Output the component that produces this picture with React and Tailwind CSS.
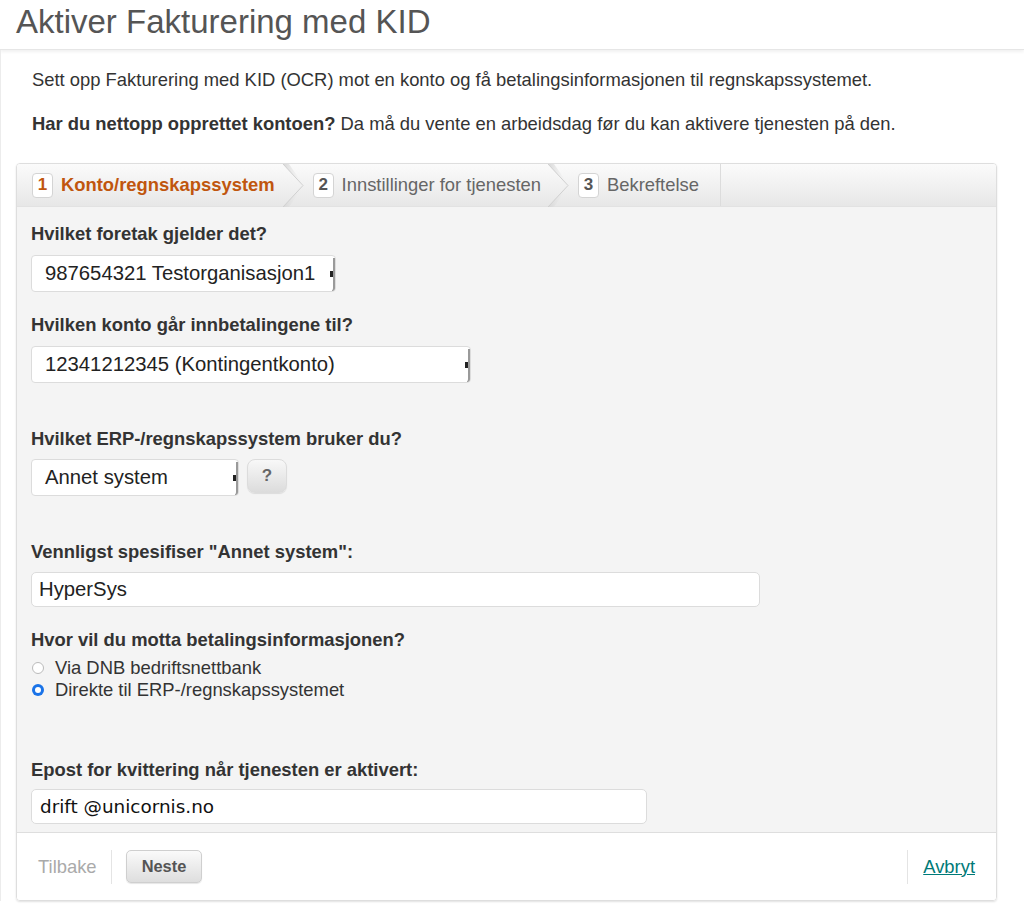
import React from "react";

const font = { fontFamily: '"Liberation Sans", Arial, sans-serif' };

function Chevron() {
  return (
    <svg width="21" height="43" viewBox="0 0 21 43" className="shrink-0">
      <defs>
        <linearGradient id="chs" x1="0" x2="1" y1="0" y2="0">
          <stop offset="0" stopColor="#d6d6d6" />
          <stop offset="1" stopColor="#f2f2f2" stopOpacity="0" />
        </linearGradient>
      </defs>
      <polygon points="0,0 20,21.5 0,43 6,43 21,21.5 6,0" fill="url(#chs)" />
      <polyline points="0,0 20,21.5 0,43" fill="none" stroke="#d0d0d0" strokeWidth="1" />
    </svg>
  );
}

function Badge({ n, active }) {
  return (
    <span
      className={`inline-flex h-[25px] w-[21px] shrink-0 items-center justify-center rounded-[4px] border border-[#d4d4d4] bg-white text-[17px] font-bold ${
        active ? "text-[#c0560e]" : "text-[#555]"
      }`}
    >
      {n}
    </span>
  );
}

function FakeSelect({ width, children }) {
  return (
    <div
      className="relative flex h-[37px] shrink-0 items-center rounded-[4px] border border-[#dcdcdc] bg-white pl-[13px] text-[20.3px] text-[#222]"
      style={{ width }}
    >
      <span>{children}</span>
      <span className="absolute right-0 top-[2px] bottom-0 w-[3px] rounded-br-[3px] border-r-2 border-b border-[#9a9a9a]" />
      <span className="absolute right-[2px] top-[15px] h-[6px] w-[3px] bg-[#222]" />
    </div>
  );
}

function Label({ children, className = "" }) {
  return <div className={`text-[18.4px] font-bold leading-[22px] text-[#333] ${className}`}>{children}</div>;
}

export default function App() {
  return (
    <div className="min-h-[913px] bg-white" style={font}>
      <div className="h-[50px] border-b border-[#e6e6e6] pl-4 pt-[1px] shadow-[0_2px_3px_rgba(0,0,0,0.06)]">
        <h1 className="text-[33px] leading-[42px] text-[#555]">Aktiver Fakturering med KID</h1>
      </div>
      <div className="border-l border-[#ececec] pl-[15px] pr-[27px]">
        <p className="pl-[16px] pt-[19px] text-[18.4px] leading-[22px] text-[#333]">
          Sett opp Fakturering med KID (OCR) mot en konto og få betalingsinformasjonen til regnskapssystemet.
        </p>
        <p className="pl-[16px] pt-[22px] text-[18.4px] leading-[22px] text-[#333]">
          <b>Har du nettopp opprettet kontoen?</b> Da må du vente en arbeidsdag før du kan aktivere tjenesten på den.
        </p>

        <div className="mt-[28px] overflow-hidden rounded-[4px] border border-[#dedede] shadow-[0_1px_2px_rgba(0,0,0,0.12)]">
          {/* tab bar */}
          <div className="flex h-[43px] items-center border-b border-[#e2e2e2] bg-gradient-to-b from-[#fbfbfb] to-[#e7e7e7]">
            <div className="flex h-full items-center gap-[8px] pl-[15px] pr-[8px]">
              <Badge n="1" active />
              <span className="whitespace-nowrap text-[18.4px] font-bold text-[#c0560e]">Konto/regnskapssystem</span>
            </div>
            <Chevron />
            <div className="flex h-full items-center gap-[8px] pl-[9px] pr-[7px]">
              <Badge n="2" />
              <span className="whitespace-nowrap text-[18.4px] text-[#666]">Innstillinger for tjenesten</span>
            </div>
            <Chevron />
            <div className="flex h-full items-center gap-[8px] border-r border-[#dcdcdc] pl-[9px] pr-[21px]">
              <Badge n="3" />
              <span className="whitespace-nowrap text-[18.4px] text-[#666]">Bekreftelse</span>
            </div>
          </div>

          {/* body */}
          <div className="bg-[#f4f4f4] px-[14px] pt-[16px] pb-[8px]">
            <Label>Hvilket foretak gjelder det?</Label>
            <div className="mt-[10px]">
              <FakeSelect width={305}>987654321 Testorganisasjon1</FakeSelect>
            </div>

            <Label className="mt-[22px]">Hvilken konto går innbetalingene til?</Label>
            <div className="mt-[10px]">
              <FakeSelect width={440}>12341212345 (Kontingentkonto)</FakeSelect>
            </div>

            <Label className="mt-[45px]">Hvilket ERP-/regnskapssystem bruker du?</Label>
            <div className="mt-[9px] flex items-start gap-[8px]">
              <FakeSelect width={208}>Annet system</FakeSelect>
              <button className="h-[34px] w-[40px] rounded-[8px] border border-[#dcdcdc] bg-gradient-to-b from-[#f8f8f8] to-[#dcdcdc] text-[17px] font-bold text-[#666] shadow-[0_1px_1px_rgba(0,0,0,0.1)]">
                ?
              </button>
            </div>

            <Label className="mt-[45px]">Vennligst spesifiser "Annet system":</Label>
            <div className="mt-[9px] flex h-[35px] w-[729px] items-center rounded-[5px] border border-[#dcdcdc] bg-white pl-[7px] text-[20.3px] text-[#222]">
              HyperSys
            </div>

            <Label className="mt-[22px]">Hvor vil du motta betalingsinformasjonen?</Label>
            <div className="mt-[6px] flex flex-col text-[18.4px] leading-[22px] text-[#333]">
              <div className="flex items-center">
                <span className="ml-[1px] h-[12px] w-[12px] rounded-full border border-[#bbb] bg-white" />
                <span className="ml-[11px]">Via DNB bedriftsnettbank</span>
              </div>
              <div className="flex items-center">
                <span className="ml-[1px] flex h-[12px] w-[12px] items-center justify-center rounded-full bg-[#1a73e8]">
                  <span className="h-[6px] w-[6px] rounded-full bg-white" />
                </span>
                <span className="ml-[11px]">Direkte til ERP-/regnskapssystemet</span>
              </div>
            </div>

            <Label className="mt-[58px]">Epost for kvittering når tjenesten er aktivert:</Label>
            <div
              className="mt-[8px] flex h-[35px] w-[616px] items-center rounded-[5px] border border-[#dcdcdc] bg-white pl-[8px] text-[18.4px] text-[#111]"
              style={{ fontFamily: '"DejaVu Sans", Verdana, sans-serif' }}
            >
              drift @unicornis.no
            </div>
          </div>

          {/* footer */}
          <div className="flex h-[68px] items-center border-t border-[#dedede] bg-white">
            <span className="w-[94px] pl-[21px] text-[18.4px] text-[#aaa]">Tilbake</span>
            <span className="h-[34px] w-px bg-[#e4e4e4]" />
            <button className="ml-[14px] h-[33px] w-[76px] rounded-[5px] border border-[#cfcfcf] bg-gradient-to-b from-[#fafafa] to-[#dedede] text-[16.4px] font-bold text-[#555] shadow-[0_1px_1px_rgba(0,0,0,0.1)]">
              Neste
            </button>
            <div className="flex-1" />
            <span className="h-[34px] w-px bg-[#e4e4e4]" />
            <a href="#" className="ml-[15px] mr-[21px] text-[18.4px] text-[#007a78] underline">Avbryt</a>
          </div>
        </div>
      </div>
    </div>
  );
}
